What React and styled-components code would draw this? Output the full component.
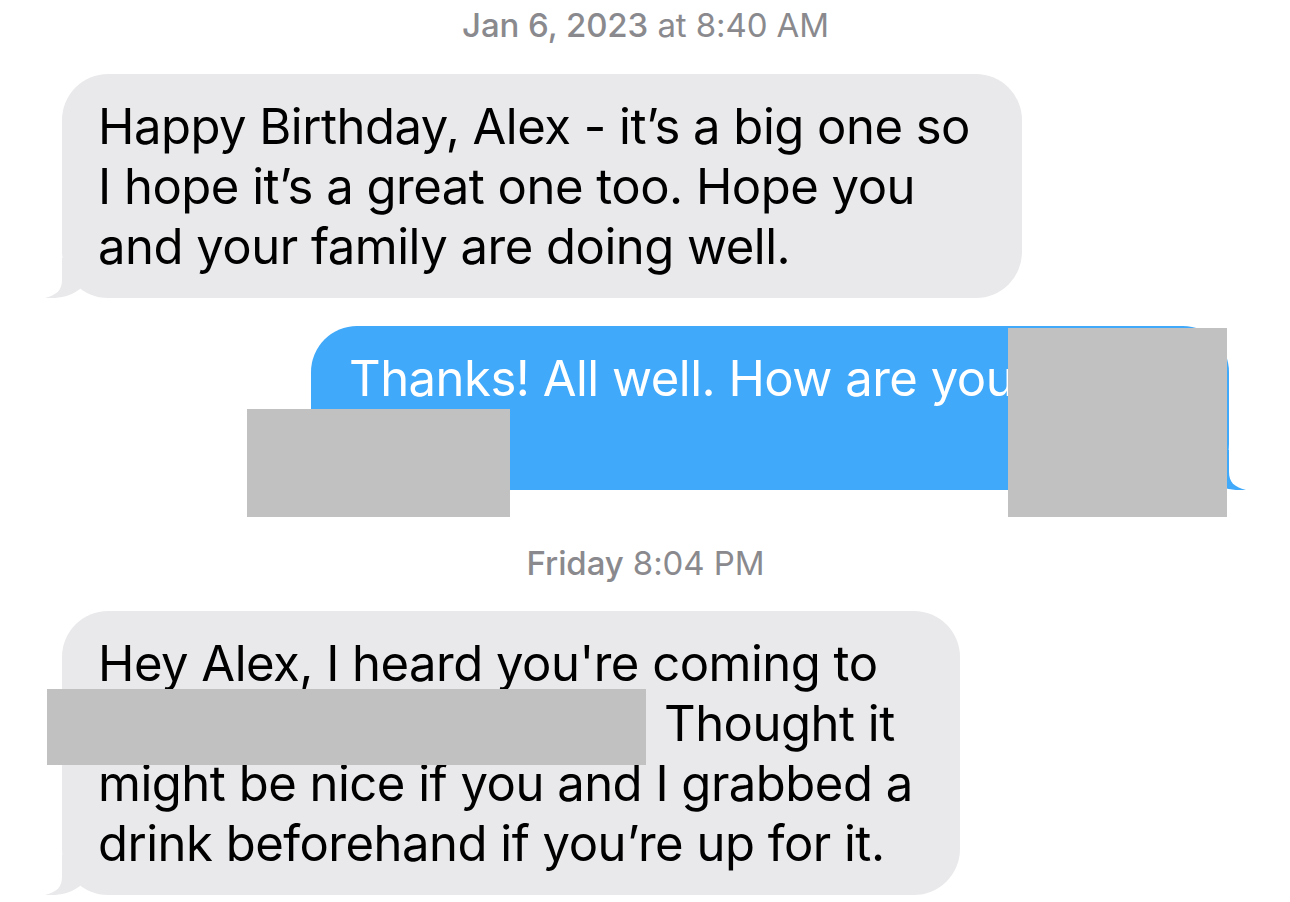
import React from 'react';
import styled, { createGlobalStyle } from 'styled-components';

const Global = createGlobalStyle`
  html, body {
    margin: 0;
    padding: 0;
    background: #fff;
  }
  body {
    font-family: Inter, "Noto Sans", "Liberation Sans", sans-serif;
    -webkit-font-smoothing: antialiased;
  }
`;

const Thread = styled.div`
  width: 1290px;
  height: 902px;
  overflow: hidden;
  box-sizing: border-box;
  padding: 5px 61px 0 62px;
  display: flex;
  flex-direction: column;
`;

const Stamp = styled.div`
  text-align: center;
  font-size: 33px;
  line-height: 41px;
  color: #8a8a8e;
  letter-spacing: -0.1px;
  margin-top: ${p => p.$top || 0}px;
  margin-bottom: ${p => p.$bottom || 0}px;

  b {
    font-weight: 500;
  }
`;

const Row = styled.div`
  display: flex;
  justify-content: ${p => (p.$mine ? 'flex-end' : 'flex-start')};
  margin-bottom: ${p => p.$gap || 0}px;
`;

const Bubble = styled.div`
  position: relative;
  box-sizing: border-box;
  width: ${p => p.$w}px;
  padding: 23px 30px 21px ${p => (p.$mine ? 38 : 36)}px;
  border-radius: 46px;
  background: ${p => (p.$mine ? '#40a9f9' : '#e9e9eb')};
  color: ${p => (p.$mine ? '#fff' : '#000')};
  font-size: 49px;
  line-height: 60px;
  letter-spacing: -0.5px;
  white-space: nowrap;
`;

const Tail = styled.svg`
  position: absolute;
  bottom: 0;
  width: 40px;
  height: 40px;
  ${p => (p.$mine ? 'right: -17px; transform: scaleX(-1);' : 'left: -17px;')}
`;

const Redact = styled.div`
  position: absolute;
  background: #c1c1c1;
  z-index: 2;
`;

const Gap = styled.span`
  display: inline-block;
  width: ${p => p.$w}px;
`;

const BubbleTail = ({ mine }) => (
  <Tail $mine={mine} viewBox="0 0 40 40">
    <path
      d="M17 0 L17 22 C17 32 12 37 0 40 C14 41 26 38 35 31 L35 0 Z"
      fill={mine ? '#40a9f9' : '#e9e9eb'}
    />
  </Tail>
);

export default function App() {
  return (
    <>
      <Global />
      <Thread>
        <Stamp $bottom={28}>
          <b>Jan 6, 2023</b> at 8:40 AM
        </Stamp>

        <Row $gap={28}>
          <Bubble $w={960}>
            Happy Birthday, Alex - it’s a big one so
            <br />I hope it’s a great one too. Hope you
            <br />and your family are doing well.
            <BubbleTail />
          </Bubble>
        </Row>

        <Row $mine>
          <Bubble $mine $w={918}>
            Thanks! All well. How are you
            <br />&nbsp;
            <BubbleTail mine />
            <Redact style={{ left: -64, top: 83, width: 263, height: 108 }} />
            <Redact style={{ left: 697, top: 2, width: 219, height: 189 }} />
          </Bubble>
        </Row>

        <Stamp $top={53} $bottom={27}>
          <b>Friday</b> 8:04 PM
        </Stamp>

        <Row>
          <Bubble $w={898}>
            Hey Alex, I heard you're coming to
            <br />
            <Gap $w={566} />Thought it
            <br />might be nice if you and I grabbed a
            <br />drink beforehand if you’re up for it.
            <BubbleTail />
            <Redact style={{ left: -15, top: 78, width: 599, height: 76 }} />
          </Bubble>
        </Row>
      </Thread>
    </>
  );
}
